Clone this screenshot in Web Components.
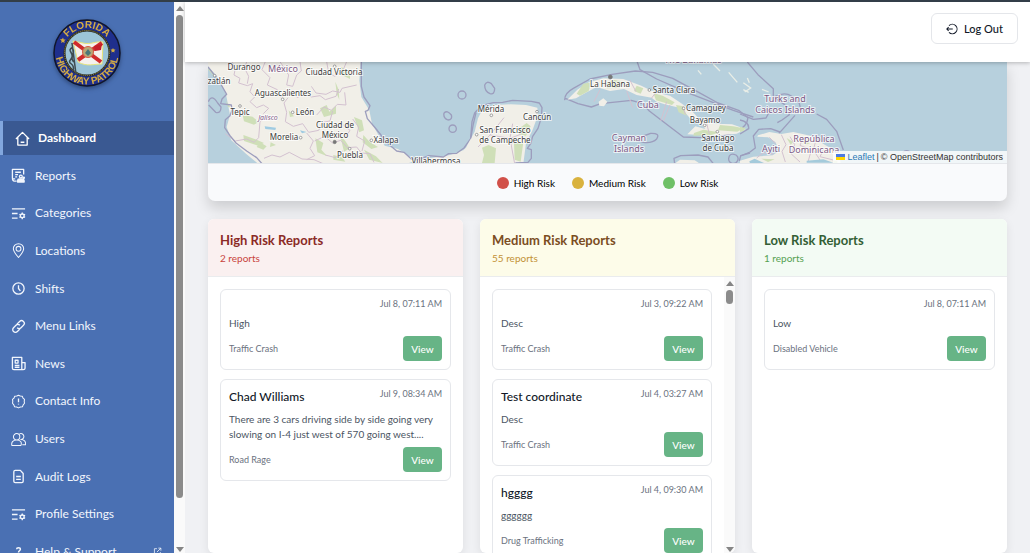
<!DOCTYPE html>
<html lang="en">
<head>
<meta charset="utf-8">
<meta name="viewport" content="width=device-width, initial-scale=1">
<title>Dashboard</title>
<style>
html, body { height: 100%; margin: 0; }
body { font: 12px/16px Lato, "Open Sans", sans-serif; color: #111827; overflow: hidden; }
</style>
</head>
<body>
<app-shell>
  <side-nav slot="nav">
    <nav-item icon="home" active>Dashboard</nav-item>
    <nav-item icon="report">Reports</nav-item>
    <nav-item icon="tune">Categories</nav-item>
    <nav-item icon="pin">Locations</nav-item>
    <nav-item icon="clock">Shifts</nav-item>
    <nav-item icon="link">Menu Links</nav-item>
    <nav-item icon="news">News</nav-item>
    <nav-item icon="alert">Contact Info</nav-item>
    <nav-item icon="users">Users</nav-item>
    <nav-item icon="file">Audit Logs</nav-item>
    <nav-item icon="tune">Profile Settings</nav-item>
    <nav-item icon="help" external>Help &amp; Support</nav-item>
  </side-nav>
  <top-bar slot="top">Log Out</top-bar>
  <map-card>
    <legend-item tone="high">High Risk</legend-item>
    <legend-item tone="medium">Medium Risk</legend-item>
    <legend-item tone="low">Low Risk</legend-item>
  </map-card>
  <report-board>
    <report-column tone="high" heading="High Risk Reports" count="2 reports">
      <report-card date="Jul 8, 07:11 AM" kind="Traffic Crash">High</report-card>
      <report-card name="Chad Williams" date="Jul 9, 08:34 AM" kind="Road Rage">There are 3 cars driving side by side going very slowing on I-4 just west of 570 going west....</report-card>
    </report-column>
    <report-column tone="medium" heading="Medium Risk Reports" count="55 reports" scroll>
      <report-card date="Jul 3, 09:22 AM" kind="Traffic Crash">Desc</report-card>
      <report-card name="Test coordinate" date="Jul 4, 03:27 AM" kind="Traffic Crash">Desc</report-card>
      <report-card name="hgggg" date="Jul 4, 09:30 AM" kind="Drug Trafficking">gggggg</report-card>
    </report-column>
    <report-column tone="low" heading="Low Risk Reports" count="1 reports">
      <report-card date="Jul 8, 07:11 AM" kind="Disabled Vehicle">Low</report-card>
    </report-column>
  </report-board>
</app-shell>

<script>
const define = (name, render) => customElements.define(name, class extends HTMLElement {
  connectedCallback() {
    if (this.shadowRoot) return;
    this.attachShadow({ mode: 'open' }).innerHTML = render(this);
  }
});

const ICONS = {
  home: '<path d="M1 8.500 8 1.500l7 7M3 7v8H13V7M6 12h4"/>',
  report: '<path d="M13.500 7V1.500h-12v9c0 2.300.5 3.500 2 3.500h2.500M1.500 11.500h3M4.500 4.500h6M4.500 7h3M4.500 9.500h2"/><circle cx="10.500" cy="9" r="1.500"/><path d="M7 15v-1.500c0-1 1-1.800 2-1.800h3c1 0 2 .8 2 1.800V15z" fill="currentColor"/><circle cx="13.500" cy="10.500" r=".8"/>',
  tune: '<path d="M1 3h14M1 8h6M1 13h6"/><circle cx="12" cy="10.500" r="2"/><path d="M12 7v1.500M12 12.500V14M9 8.800l1.200.7M13.800 11.500l1.200.7M9 12.200l1.200-.7M13.800 9.500l1.200-.7"/>',
  pin: '<path d="M8 15.500C5 12 2.500 9 2.500 6.200a5.500 5.500 0 0 1 11 0C13.500 9 11 12 8 15.500z" stroke-width="1.100"/><circle cx="8" cy="6.200" r="2.600" stroke-width="1.100"/>',
  clock: '<circle cx="8" cy="8" r="6"/><path d="M8 4.500V8l2 2.500"/>',
  link: '<path d="m6.300 5.500 2.900-2.900a2.850 2.850 0 0 1 4.100 4.100L10.700 9.300a2.850 2.850 0 0 1-4.100 0M9.700 10.500l-2.900 2.900a2.850 2.850 0 0 1-4.100-4.100l2.600-2.600a2.850 2.850 0 0 1 4.100 0"/>',
  news: '<path d="M11.500 14.500V1.500H1.500v11.500q0 1.500 1.500 1.500h10q2 0 2-1.500V7h-3.500M4 10h5M4 12h5"/><path d="M4.500 4.500h3v3h-3z"/>',
  alert: '<path d="m8 1.300 1.900.9 2.100.2.800 1.900 1.600 1.400-.3 2.100.3 2.100-1.400 1.700-.8 2-2.200.3L8 14.800l-2-.9-2.200-.3-.8-2-1.400-1.700.3-2.100-.3-2.100 1.600-1.400.8-1.900 2.100-.2z" stroke-width="1.100"/><path d="M8 4.800v4M8 10.300v1"/>',
  users: '<path d="M6 8.500a3.400 3.400 0 1 1 0-6.800 3.400 3.400 0 0 1 0 6.800zM1 14.500c-1-3.500 1-6 5-6s6 2.500 4.500 6zM9 2a3.200 3.200 0 1 1 1.500 6c3.500 0 5.500 2 5 5.500h-3.500" stroke-width="1.100"/>',
  file: '<path d="M10 1.500H4.500Q3 1.500 3 3v10q0 1.500 1.500 1.500h7q1.500 0 1.500-1.500V4.800zM5.500 8h5M5.500 11h5"/>',
  help: '<path d="M6 5.500C6 3.500 10 3.300 10 5.700 10 7.200 8 7.300 8 9M8 11.500v1" stroke-width="1.600"/>',
  external: '<path d="M7 3H2.500v10.500H13V9M9.500 2H14v4.500M14 2 7 9"/>',
  logout: '<path d="M4 3.500a6.300 6.300 0 1 1 0 9M.5 8H9M3.500 5.500 1 8l2.500 2.500"/>'
};
const icon = (name, size) => `<svg width="${size}" height="${size}" viewBox="0 0 16 16" fill="none" stroke="currentColor" stroke-width="1.400" stroke-linejoin="round" aria-hidden="true">${ICONS[name]}</svg>`;

define('app-shell', () => `
<style>
  :host { display: grid; grid-template-columns: auto minmax(0, 1fr); height: 100vh; box-sizing: border-box; border-top: 2px solid #333e48; background: #f0f1f4; overflow: hidden; }
  .page { display: flex; flex-direction: column; min-height: 0; }
  main { flex: 1; min-height: 0; display: flex; flex-direction: column; gap: 18px; padding: 0 23px; }
</style>
<slot name="nav"></slot>
<div class="page"><slot name="top"></slot><main><slot></slot></main></div>`);

define('scroll-rail', el => `
<style>
  :host { display: flex; flex-direction: column; align-items: center; width: 11px; background: #fafafa; }
  i { display: block; border: 4px solid transparent; }
  .up { border-top: 0; border-bottom: 5px solid #858585; margin: 4px 0; }
  .down { border-bottom: 0; border-top: 5px solid #858585; margin: auto 0 1px; }
  .thumb { width: 7px; height: ${el.getAttribute('thumb')}; border-radius: 4px; background: #8b8b8b; }
</style>
<i class="up"></i><div class="thumb"></div><i class="down"></i>`);

define('side-nav', () => `
<style>
  :host { display: flex; min-height: 0; overflow: hidden; }
  .panel { width: 174px; background: #4a70b3; color: #f2f6fd; overflow: hidden; }
  patrol-seal { margin: 15px auto 32px; }
  nav { display: flex; flex-direction: column; justify-content: space-between; height: 448px; }
  scroll-rail { flex: none; }
</style>
<div class="panel">
  <patrol-seal></patrol-seal>
  <nav><slot></slot></nav>
</div>
<scroll-rail thumb="483px"></scroll-rail>`);

define('nav-item', el => `
<style>
  :host { display: block; flex: none; }
  a { display: flex; align-items: center; gap: 9px; height: 34px; padding: 0 12px 0 11px; color: inherit; text-decoration: none; font-size: 12px; }
  :host([active]) a { background: #3a5992; border-left: 3px solid #82a7de; padding-left: 12px; gap: 8px; font-weight: 700; color: #fff; }
  svg { flex: none; }
  .label { flex: 1; }
</style>
<a href="#">${icon(el.getAttribute('icon'), 15)}<span class="label"><slot></slot></span>${el.hasAttribute('external') ? icon('external', 9) : ''}</a>`);

define('patrol-seal', () => `
<style>
  :host { display: block; width: 72px; }
  svg { display: block; filter: drop-shadow(0 2px 2px rgba(20,35,70,.5)); }
  text { font: 700 10px "Liberation Sans", sans-serif; fill: #d5ad43; }
</style>
<svg width="72" height="72" viewBox="0 0 72 72" role="img" aria-label="Florida Highway Patrol">
  <defs>
    <path id="top" d="M11 36a25 25 0 0 1 50 0"/>
    <path id="low" d="M4.500 36A31.500 31.500 0 0 0 67.500 36"/>
  </defs>
  <circle cx="36" cy="36" r="33" fill="#1f2f8d" stroke="#11162b" stroke-width="1.500"/>
  <circle cx="36" cy="36" r="22.500" fill="#9cc5d7" stroke="#272a24" stroke-width="2"/>
  <circle cx="36" cy="36" r="22.500" fill="none" stroke="#a4934e" stroke-width="1" stroke-dasharray="1 1"/>
  <path d="m22 24 10 2c8 2 12-2 20-1l-1 22c-8 0-15 3-24-2z" fill="#f5f1ed" stroke="#e8e57b"/>
  <path d="m23 25 27 20M51 26 27 43" stroke="#d02b2c" stroke-width="4"/>
  <path d="m43 29 8-2-1 6-6 1z" fill="#c51e29"/>
  <circle cx="37" cy="35" r="5.500" fill="#b8a675" stroke="#d65b43"/>
  <path d="m34 36 3-4 3 4-3 3z" fill="#497777"/>
  <path d="m21 26 4 31M22 30c-8 4 3 6-2 12s5 3 2 12M21 31c5 4-4 10 2 14" fill="none" stroke="#3e4b50" stroke-width="1.500"/>
  <text text-anchor="middle"><textPath href="#top" startOffset="50%">FLORIDA</textPath></text>
  <text text-anchor="middle"><textPath href="#low" startOffset="50%">HIGHWAY PATROL</textPath></text>
  <path d="m9 22 2 .2 1-1.700.7 1.900 2 .2-1.500 1.500.4 2-1.700-1-1.700 1 .4-2zM62 31l.8 1.500 1.700.1-1.300 1.300.4 1.700-1.600-.8-1.600.8.4-1.700-1.300-1.300 1.700-.1z" fill="#d5ad43"/>
</svg>`);

define('top-bar', () => `
<style>
  :host { display: flex; align-items: center; justify-content: flex-end; height: 60px; box-sizing: border-box; padding: 0 12px 7px; background: #fff; box-shadow: 0 1px 4px rgba(0,0,0,.25); position: relative; z-index: 1; flex: none; }
  button { display: flex; align-items: center; gap: 6px; height: 31px; padding: 0 14px; border: 1px solid #e4e6ea; border-radius: 6px; background: #fff; color: #111827; font: 500 11px/16px Lato, sans-serif; }
</style>
<button type="button">${icon('logout', 12)}<span><slot></slot></span></button>`);

define('legend-item', el => `
<style>
  :host { display: flex; align-items: center; gap: 5px; font: 10px/16px Lato, sans-serif; color: #000; }
  i { width: 12px; height: 12px; border-radius: 50%; background: ${{ high: '#d15049', medium: '#d9b23e', low: '#6fc067' }[el.getAttribute('tone')]}; }
</style><i></i><span><slot></slot></span>`);

/* Each label: x, y, text, css class */
const PLACES = [
  [36,8,'Durango'],[75,10,'México','country'],[126,13,'Ciudad Victoria'],[11,22,'zatlán'],[75,34,'Aguascalientes'],
  [32,53,'Tepic'],[60,58,'Jalisco','state'],[97,53,'León'],[127,66,'Ciudad de'],[127,76,'México'],[76,78,'Morelia'],
  [178,81,'Xalapa'],[142,96,'Puebla'],[228,102,'Villahermosa'],[283,50,'Mérida'],[329,58,'Cancún'],
  [297,71,'San Francisco'],[297,81,'de Campeche'],[402,25,'La Habana'],[466,31,'Santa Clara'],[440,46,'Cuba','country'],
  [498,49,'Camagüey'],[497,61,'Bayamo'],[510,79,'Santiago'],[510,89,'de Cuba'],[421,79,'Cayman','country'],
  [421,90,'Islands','country'],[485,1,'The Bahamas','country'],[577,40,'Turks and','country'],[577,51,'Caicos Islands','country'],
  [606,80,'República','country'],[563,90,'Ayiti','country'],[606,91,'Dominicana','country']
];

define('risk-map', () => `
<style>
  :host { display: block; position: relative; height: 101px; overflow: hidden; background: #b7d0dd; }
  svg.map { display: block; width: 100%; height: 100%; }
  .land { fill: #f1efe8; }
  .green { fill: #cfdfb8; }
  .coast { fill: none; stroke: #9c9dbd; stroke-width: 4; stroke-linejoin: round; }
  .border { fill: none; stroke: #d3c1d0; stroke-width: 3; stroke-linejoin: round; }
  .dot { fill: #fff; stroke: #777; stroke-width: 2; }
  text { font: 8px "Noto Sans", sans-serif; fill: #3c3c3c; text-anchor: middle; stroke: rgba(255,255,255,.7); stroke-width: 2px; paint-order: stroke; }
  text.country { font-size: 9px; fill: #7d5a86; }
  text.state { font-size: 7px; font-style: italic; fill: #85628c; }
  .credit { position: absolute; right: 0; bottom: 0; display: flex; align-items: center; gap: 2px; height: 12px; padding: 0 4px 0 3px; background: rgba(255,255,255,.8); font: 9px/12px "Liberation Sans", sans-serif; color: #333; }
  .credit a { color: #2a78b5; text-decoration: none; }
</style>
<svg class="map" viewBox="0 0 799 101" preserveAspectRatio="xMidYMid slice" role="img" aria-label="Map of reports">
  <g transform="translate(-8 -7) scale(.33333)">
    <path class="land" d="M24 20v14l30 34 24 50 12 62-10 36 14 40 44 40 36 30h480l-14-14-46-30-40-10-38-66-8-40-24-40-6-50 4-56zM610 330l40-14 100-16 40-14 40-40V330z"/>
    <g class="green">
      <path d="m24 38 12 10 10 20-20-22zM128 180l30 5 18 16-14 8-30-10zM130 240l40 14 22 10-18 8-42-14zM180 262l20 12-10 10-20-8zM360 160l20-10 8 20 20-18v24l-36 10zM406 80l10 24 2 30-8-18zM424 36l26 16v20l-24-12zM462 186l24 10 6 30-14 6zM490 240l20 22 24 14-20 6-26-20zM346 250l24 14-6 20 18 20-30-12zM420 240l16 18 14 22-18 10zM492 284l36 20 20 20-40-10zM400 300l26 6 10 14-36-6z"/>
      <path d="M78 138l14 20-8-2zM266 166l16 18-12 2zM212 262l16 8-18 6z"/>
    </g>
    <path fill="#9fcbe2" d="m194 214 34 4-2 7-30-3zM300 226l20 5-14 4z"/>
    <path class="border" d="M96 20 106 40 102 60 120 70 116 84 142 92 158 86 150 110 164 126 150 140 170 158 190 150 206 160 190 176M140 20l-6 20 12 24-4 22M196 20l-10 24 24 24-8 22 30 14 10 22 30-12 22 14 16-18 24 16 26-4 16 12 32-10 8-22M240 20l26 40-6 30 18 4 12-34 14-12-4-28M264 128l-12 16 8 28-4 28 24 14 28-8 18 26 30-6 12-24 22-4 8-30M334 94l14 20 30 4 20-10 22 4 6-12 44-10M380 20l6 34 18 10 24-16 12-28M350 180l22-24 22 10 18-18 26 2-4-38M320 234l20 24-10 22 14 22-24 12M344 258l30-14 24 20 24-8 20 22 28-2 14 18 26 2 12 26M376 300l30 8 22-20M458 192l18 24-6 28 24 14-8 30M430 210l20 16-14 22M76 236l30 22 34-6 22 10 14-14 4-48 20-16M192 310l24-10 24 6 28-14 38 20 36 2 32 14"/>
    <path class="coast" d="M24 36 48 66 64 90 80 118 66 132 62 146 94 150 96 166 90 182 76 194 74 218 90 242 108 264 140 288 170 308 186 326M484 20v74l8 32 18 26-6 14-8 3 6 22 24 28 36 45 28 24 22 4 22 20 32-2 20-8 44 4 16-10 24-1 22-16 20-28 8-44 8-34"/>
    <path class="coast" d="M25 140q10-25 28 4l10 12q0 20-16 16L26 150M774 120a12 12 0 1 0 24 0 12 12 0 1 0-24 0M732 174q10-10 22 6 4 14-10 15-15-6-12-21M747 221a11 11 0 1 0 22 0 11 11 0 1 0-22 0"/>
    <g class="dot"><circle cx="44" cy="62" r="4"/><circle cx="404" cy="34" r="4"/><circle cx="248" cy="133" r="4"/><circle cx="120" cy="153" r="4"/><circle cx="278" cy="172" r="4"/><circle cx="302" cy="248" r="4"/><circle cx="514" cy="256" r="4"/><circle cx="449" cy="281" r="4"/><circle cx="404" cy="261" r="5" fill="#777"/></g>
  </g>
  <g transform="translate(262 -7) scale(.33333)">
    <path class="land" d="M-10 330v-56l24-44 10-40 14-28 38-12 46-2 46 2 34 8 2 22-16 44-20 40-8 62z"/>
    <path class="green" d="m36 278 20-8 22 10-4 44H36l6-24zM150 218l20-14 12 10-14 28-22-4zM132 264l28-2-8 58-18-6z"/>
    <path class="border" d="M24 276 60 240l42-52M60 240l60 10 32-12M128 206l-8 44 14 76"/>
    <path class="coast" d="M2 250 6 200l8-26 20-22 36-9 28-1 30-6 56 3 24 5 8 14-2 30-10 32-16 24-6 22-10 14 12 4v26l-10 12-38 2M44 90q6-14 20-4l10 14q0 20-14 16-16-6-16-26"/>
    <path class="coast" d="M284 134q0-20 26-34l50-28 66-14 70-10 52 4 60 18 74 40 62 34 62 22 28 22q-2 28-38 44l-38 10-68 6-50-2-60-46-42-32-20-22-34-10-92 10-28 10-40-10-38-16z"/>
    <path class="land" d="M292 134 322 104 356 82 400 70 460 72 514 92 554 112 600 122 636 146 668 170 690 194 734 206 786 208 816 218 828 222 800 236 730 242 652 238 676 214 706 222 690 202 662 192 634 160 584 148 560 140 545 128 500 120 462 102 420 108 380 96 350 112 318 130z"/>
    <path class="green" d="m320 116 20-30 24-4-8 26-26 14zM410 84l20-10 28 6-6 18-42 2zM500 92l20 8-8 16-20-8zM550 114l28 8 36 20-8 8-48-14zM618 150l22 4 10 28-24-10zM672 234l28-10 48 8-24 8-54 2zM750 210l40 4 30 6-18 10-58-4z"/>
    <path class="land" d="m386 140 14-10 12 10-10 14-14-2zM614 326l16-12 44 2 16 10z"/>
    <path class="border" d="m390 104-18 36M470 108l18 50M590 140l-18 58M600 150l-20 48M480 76l18 34M560 110l-16 20M638 154l8 24M710 204l8 34"/>
    <path class="coast" d="m484 250 36 12q26 4 40-10 12-18-18-17l-22 8M500 16l10 28 50 28 100 44 130 50 60 20M614 326l-2-16 20-8 52-2 30 6 16 20M776 310a14 14 0 1 0 22-10q-20-8-22 10M808 318l4-16 28-8"/>
    <path fill="none" stroke="#e9eee7" stroke-width="4" d="m730 28 20 20M776 52l26 30M820 104l16 8M684 46l10 12"/>
    <g class="dot"><circle cx="64" cy="181" r="4"/><circle cx="201" cy="170" r="4"/><circle cx="20" cy="239" r="4"/><circle cx="421" cy="66" r="6" fill="#777"/><circle cx="538" cy="105" r="4"/><circle cx="641" cy="160" r="4"/><circle cx="704" cy="211" r="4"/><circle cx="742" cy="230" r="4"/></g>
  </g>
  <g transform="translate(532 -62) scale(.33333)">
    <path class="coast" d="m22 186 32 38 46 42v24l34 24 14 30-22 16-14 8M0 342l40 16 38-4 12-22 14-6M104 290q30-16 50-2l24 22 4 18M230 342l30 16 30 36 20 56M165 346l-48 54M120 396l-28-10-36 2-16 20 6 36-16 12-28 12M0 360q28 6 26 26l-26 16"/>
    <path class="land" d="m54 406 34-10 36 6 36-6 54 12 40 26 44 24 4 34H0v-10l40-12 58-4 20-14-12-26-22-14-32-2z"/>
    <path class="green" d="m0 380 16 4-4 8-12 4zM140 414l20 12-8 8zM184 420l26 10-14 4zM280 482h12v8h-12zM64 476l40 2-20 8z"/>
    <path class="border" d="m124 404 14 30-12 20 10 32M150 410l14 24-10 28 26 24M190 412l-10 24 34 14-10 36M228 420l-8 30 24 36M100 462l-30-4-20 16M252 446l-12 24 40 10M106 430l-18-18"/>
    <path fill="#a4cadb" d="m28 484 16-8 30 14H30zM200 482l50-4 30 10h-80z"/>
    <path fill="none" stroke="#e9eee7" stroke-width="4" d="m10 248 22 16-18 12M22 234l6 14M66 268l20 8"/>
    <path class="coast" d="M488 458q12-12 24 0"/>
  </g>
  ${PLACES.map(([x, y, t, c = '']) => `<text x="${x}" y="${y}" class="${c}">${t}</text>`).join('')}
</svg>
<div class="credit">
  <svg width="9" height="6" viewBox="0 0 9 6" aria-hidden="true"><path fill="#4c7be1" d="M0 0h9v3H0z"/><path fill="#ffd500" d="M0 3h9v3H0z"/></svg>
  <a href="#">Leaflet</a><span>|</span><span>© OpenStreetMap contributors</span>
</div>`);

define('map-card', () => `
<style>
  :host { display: block; flex: none; border-radius: 0 0 7px 7px; background: #f9fafc; box-shadow: 0 7px 14px rgba(0,0,0,.15); }
  .legend { display: flex; justify-content: center; gap: 17px; padding: 11px 0 10px; border-top: 1px solid #e5e7eb; }
</style>
<risk-map></risk-map>
<div class="legend"><slot></slot></div>`);

define('report-board', () => `
<style>
  :host { display: grid; grid-template-columns: repeat(3, minmax(0, 1fr)); grid-template-rows: minmax(0, 1fr); gap: 17px; flex: 1; min-height: 0; }
</style><slot></slot>`);

const TONES = {
  high: ['#faf0f0', '#8b2a26', '#c9443d'],
  medium: ['#fdfce9', '#7b4d1f', '#c39235'],
  low: ['#f3fbf4', '#345f35', '#55a152']
};
define('report-column', el => {
  const [bg, title, sub] = TONES[el.getAttribute('tone')];
  return `
<style>
  :host { display: flex; flex-direction: column; min-height: 0; border-radius: 6px; background: #fff; overflow: hidden; box-shadow: 0 3px 10px rgba(0,0,0,.08); }
  header { padding: 12px 12px 10px; background: ${bg}; border-bottom: 1px solid #eaecee; }
  h2 { margin: 0; font: 700 13px/19px Lato, sans-serif; color: ${title}; }
  p { margin: 0; font-size: 10px; line-height: 16px; color: ${sub}; }
  .body { display: flex; flex: 1; min-height: 0; }
  .list { flex: 1; min-width: 0; display: flex; flex-direction: column; gap: 9px; padding: 12px; overflow: hidden; }
</style>
<header><h2>${el.getAttribute('heading')}</h2><p>${el.getAttribute('count')}</p></header>
<div class="body"><div class="list"><slot></slot></div>${el.hasAttribute('scroll') ? '<scroll-rail thumb="14px"></scroll-rail>' : ''}</div>`;
});

define('report-card', el => `
<style>
  :host { display: block; flex: none; padding: 8px; border: 1px solid #e5e7eb; border-radius: 6px; background: #fff; }
  .head, .foot { display: flex; justify-content: space-between; }
  .foot { align-items: center; }
  h3 { margin: 0; font: 500 12px/18px Lato, sans-serif; color: #111827; }
  time { margin-left: auto; font-size: 9px; line-height: 12px; color: #6b7280; }
  p { margin: 6px 0 5px; font-size: 10px; line-height: 15px; color: #4b5563; }
  .kind { font-size: 9px; line-height: 12px; color: #6b7280; }
  button { width: 39px; height: 25px; padding: 0; border: 0; border-radius: 4px; background: #67b486; color: #fff; font: 500 10px/16px Lato, sans-serif; }
</style>
<div class="head">${el.hasAttribute('name') ? `<h3>${el.getAttribute('name')}</h3>` : ''}<time>${el.getAttribute('date')}</time></div>
<p><slot></slot></p>
<div class="foot"><span class="kind">${el.getAttribute('kind')}</span><button type="button">View</button></div>`);
</script>
</body>
</html>
